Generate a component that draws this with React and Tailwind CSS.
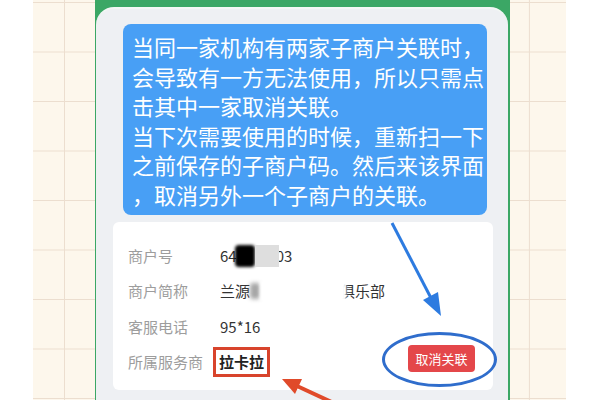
import React from 'react';

const bubbleLines = [
    '当同一家机构有两家子商户关联时，',
    '会导致有一方无法使用，所以只需点',
    '击其中一家取消关联。',
    '当下次需要使用的时候，重新扫一下',
    '之前保存的子商户码。然后来该界面',
    '，取消另外一个子商户的关联。',
];

const Label = ({ children }) => (
    <span className="w-[92px] shrink-0 text-[15px] leading-[20px] text-[#9d9d9d]">{children}</span>
);

const App = () => {
    return (
        <div className="relative flex h-[400px] w-[600px] overflow-hidden bg-white font-['Noto_Sans_CJK_SC',sans-serif]">
            {/* grid paper */}
            <div className="ml-[33px] flex h-full w-[533px] bg-[#fdf7ec] bg-[linear-gradient(to_bottom,#ecdecf_1px,transparent_1px),linear-gradient(to_right,#ecdecf_1px,transparent_1px)] bg-[size:51.67px_49.5px] bg-[position:31px_2px] pl-[62px]">
                {/* phone */}
                <div className="flex h-full w-[415px] flex-col bg-[#3ba765] pt-[7px]">
                    <div className="ml-px mr-[2px] flex flex-1 flex-col rounded-t-[18px] border-t-2 border-[#f3f7f4] bg-[#eef0f3] pt-[15px]">
                        {/* tip bubble */}
                        <div className="ml-[27px] w-[364px] rounded-[8px] bg-[#489ff5] pb-[6px] pl-[9px] pt-[8px] text-[22px] leading-[29.5px] text-white">
                            {bubbleLines.map((line) => (
                                <div key={line} className="whitespace-nowrap">{line}</div>
                            ))}
                        </div>

                        {/* merchant card */}
                        <div className="ml-[17px] mt-[7px] w-[380px] rounded-[6px] bg-white pb-[10px] pl-[15px] pr-[18px] pt-[16px]">
                            <div className="flex h-[35.5px] items-center">
                                <Label>商户号</Label>
                                <span className="flex items-center text-[15px] leading-[20px] text-[#333]">
                                    <span>64</span>
                                    <span className="-ml-[2px] inline-block h-[22px] w-[20px] rounded-[4px] bg-black blur-[1.5px]" />
                                    <span className="relative z-10 inline-block h-[22px] w-[24px] bg-[#dedede]" />
                                    <span className="-ml-[3px]">03</span>
                                </span>
                            </div>
                            <div className="flex h-[35.5px] items-center">
                                <Label>商户简称</Label>
                                <span className="relative flex items-center text-[15px] leading-[20px] text-[#333]">
                                    <span>兰源</span>
                                    <span className="inline-block h-[16px] w-[10px] rounded-[3px] bg-[#6b6b6b] opacity-60 blur-[2px]" />
                                    <span className="ml-[80px]">俱乐部</span>
                                    <span className="absolute left-[40px] top-0 h-full w-[86px] bg-white blur-[1.5px]" />
                                </span>
                            </div>
                            <div className="flex h-[35.5px] items-center">
                                <Label>客服电话</Label>
                                <span className="text-[15px] leading-[20px] text-[#333]">95*16</span>
                            </div>
                            <div className="flex h-[35.5px] items-center">
                                <Label>所属服务商</Label>
                                <span className="-ml-[7px] border-[3px] border-[#d8442c] px-[3px] py-[2px] text-[15px] font-bold leading-[20px] text-[#222]">
                                    拉卡拉
                                </span>
                                <div className="relative mb-[7px] ml-auto">
                                    <button className="flex h-[27px] w-[67px] items-center justify-center rounded-[4px] bg-[#e4474a] text-[13px] text-white">
                                        取消关联
                                    </button>
                                    <div className="absolute left-[-26px] top-[-13px] h-[55px] w-[115px] rounded-[50%] border-[3px] border-[#2f6dcc]" />
                                </div>
                            </div>
                        </div>
                    </div>
                </div>
            </div>

            {/* annotation arrows */}
            <svg className="pointer-events-none absolute inset-0" width="600" height="400" viewBox="0 0 600 400">
                <line x1="392" y1="223" x2="431" y2="298" stroke="#2d7be0" strokeWidth="3" />
                <polygon points="441,316 438,292 423,300" fill="#2d7be0" />
                <line x1="338" y1="405" x2="297" y2="386" stroke="#e04a2a" strokeWidth="4" />
                <polygon points="282,379 302,379 295,394" fill="#e04a2a" />
            </svg>
        </div>
    );
};

export default App;
